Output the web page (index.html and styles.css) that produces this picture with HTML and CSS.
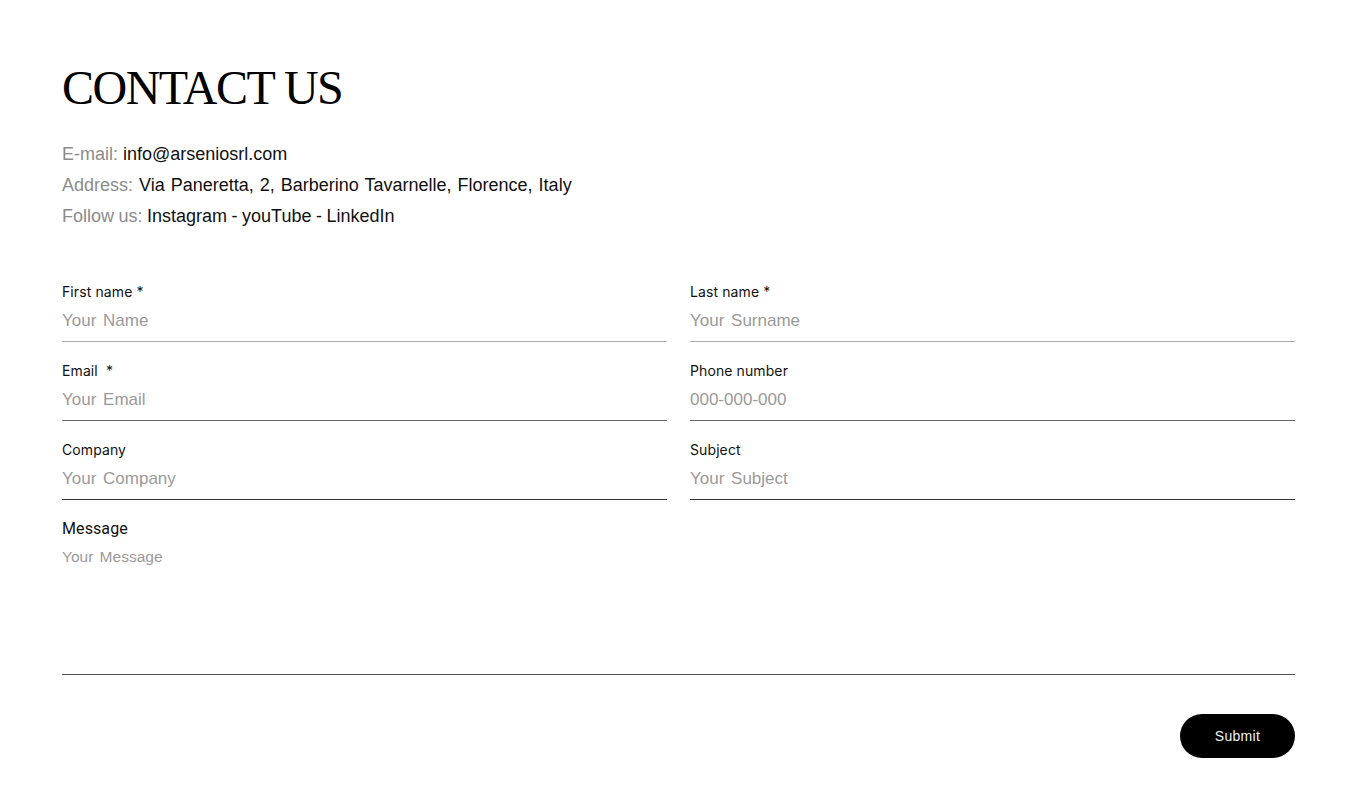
FILE: index.html
```html
<!DOCTYPE html>
<html lang="en">
<head>
<meta charset="utf-8">
<title>Contact Us</title>
<link rel="stylesheet" href="styles.css">
</head>
<body>
<main class="page">
  <h1 class="title">CONTACT US</h1>
  <div class="info">
    <p class="info-line"><span class="info-key">E-mail:</span> info@arseniosrl.com</p>
    <p class="info-line wide"><span class="info-key">Address:</span> Via Paneretta, 2, Barberino Tavarnelle, Florence, Italy</p>
    <p class="info-line tight"><span class="info-key">Follow us:</span> Instagram - youTube - LinkedIn</p>
  </div>
  <form class="form">
    <div class="grid">
      <label class="field line-1">
        <span class="label">First name *</span>
        <input class="input" type="text" placeholder="Your Name">
      </label>
      <label class="field line-1">
        <span class="label">Last name *</span>
        <input class="input" type="text" placeholder="Your Surname">
      </label>
      <label class="field line-2">
        <span class="label">Email &nbsp;*</span>
        <input class="input" type="email" placeholder="Your Email">
      </label>
      <label class="field line-2">
        <span class="label">Phone number</span>
        <input class="input" type="tel" placeholder="000-000-000">
      </label>
      <label class="field line-3">
        <span class="label">Company</span>
        <input class="input" type="text" placeholder="Your Company">
      </label>
      <label class="field line-3">
        <span class="label">Subject</span>
        <input class="input" type="text" placeholder="Your Subject">
      </label>
      <label class="field message">
        <span class="label label-lg">Message</span>
        <textarea class="textarea" placeholder="Your Message"></textarea>
      </label>
    </div>
    <div class="actions">
      <button class="submit" type="button">Submit</button>
    </div>
  </form>
</main>
</body>
</html>
```
FILE: styles.css
```css
* { box-sizing: border-box; }
html, body { margin: 0; padding: 0; background: #fff; }
body { color: #000; font-family: "Liberation Sans", Arial, sans-serif; }

.page {
  padding: 62px 62px 0 62px;
}

.title {
  margin: 0;
  font-family: "Liberation Serif", "Times New Roman", serif;
  font-weight: 400;
  font-size: 48px;
  line-height: 51px;
  letter-spacing: -1.5px;
  color: #000;
}

.info {
  margin-top: 26px;
}
.info-line {
  margin: 0;
  font-size: 18px;
  line-height: 31px;
  color: #111;
}
.info-line.wide { word-spacing: 1px; }
.info-line.tight { word-spacing: -0.5px; }
.info-key { color: #8c8c8c; }

.form { margin-top: 51px; }

.grid {
  display: grid;
  grid-template-columns: 1fr 1fr;
  column-gap: 23px;
  row-gap: 20px;
}

.field {
  display: flex;
  flex-direction: column;
}

.label {
  font-family: Inter, Roboto, "Liberation Sans", sans-serif;
  font-size: 14px;
  line-height: 18px;
  letter-spacing: 0.1px;
  color: #111;
  margin-bottom: 1px;
}
.label-lg {
  font-family: Roboto, "Liberation Sans", sans-serif;
  font-size: 16px;
}

.input, .textarea {
  border: 0;
  border-bottom: 1px solid #aaa;
  outline: none;
  background: transparent;
  font-family: "Liberation Sans", Arial, sans-serif;
  font-size: 17px;
  color: #111;
  padding: 0 0 2px 0;
  margin: 0;
  width: 100%;
  height: 40px;
}
.input::placeholder, .textarea::placeholder { color: #9a9a9a; opacity: 1; word-spacing: 2px; }

.line-1 .input { border-bottom-color: #ababab; }
.line-2 .input { border-bottom-color: #666; }
.line-3 .input { border-bottom-color: #333; }

.message { grid-column: 1 / -1; }
.textarea {
  height: 136px;
  resize: none;
  padding: 8px 0 0 0;
  line-height: 20px;
  font-size: 15.5px;
  border-bottom-color: #555;
}

.actions {
  display: flex;
  justify-content: flex-end;
  margin-top: 39px;
}
.submit {
  width: 115px;
  height: 44px;
  border: 0;
  border-radius: 22px;
  background: #000;
  color: #f2f2f2;
  font-family: "Liberation Sans", Arial, sans-serif;
  font-size: 14px;
  letter-spacing: 0.3px;
  cursor: pointer;
}
```
